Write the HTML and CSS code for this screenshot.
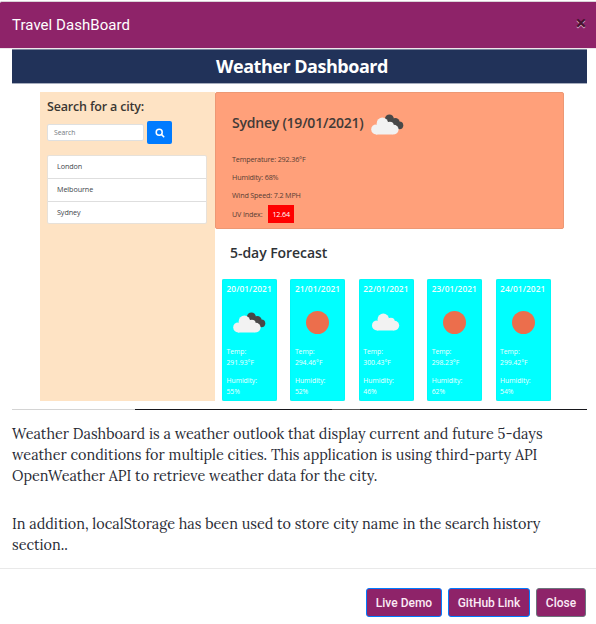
FILE: index.html
```html
<!DOCTYPE html>
<html lang="en">
<head>
<meta charset="utf-8">
<title>Travel DashBoard</title>
<link rel="stylesheet" href="styles.css">
</head>
<body>
<svg class="symbols" aria-hidden="true">
  <symbol id="cloud" viewBox="0 0 28 18"><g fill="#f2f2f2"><circle cx="5" cy="12.4" r="5"/><circle cx="11.3" cy="6.2" r="5.7"/><circle cx="18.8" cy="8.7" r="4"/><circle cx="22.4" cy="12.6" r="4.8"/><path d="M5 9 11 5l11 5v7.4H5Z"/></g></symbol>
  <symbol id="clouds" viewBox="0 0 33 21"><g fill="#484848"><circle cx="18.4" cy="4.9" r="4.5"/><circle cx="24.4" cy="8.2" r="4.2"/><circle cx="28.4" cy="11.3" r="3.9"/><path d="m17 5 8 0 4 10h-4Z"/></g><g fill="#f2f2f2"><circle cx="5.2" cy="15.4" r="5"/><circle cx="11.4" cy="9.2" r="5.7"/><circle cx="18.8" cy="11.7" r="4"/><circle cx="22.8" cy="15.6" r="4.8"/><path d="m5 12 6-4 11 5v7.4H5Z"/></g></symbol>
</svg>
<div class="modal">
  <header class="modal-header"><h5>Travel DashBoard</h5><button class="dismiss" aria-label="Close">×</button></header>
  <main class="modal-body">
    <section class="shot">
      <div class="banner"><span class="banner-text">Weather Dashboard</span></div>
      <div class="dashboard">
        <aside class="sidebar">
          <h3>Search for a city:</h3>
          <div class="search"><div class="field">Search</div><div class="search-button"><svg viewBox="0 0 10 10"><circle cx="4.2" cy="4.2" r="3"/><path d="m6.4 6.4 2.8 2.8"/></svg></div></div>
          <ul class="cities"><li>London</li><li>Melbourne</li><li>Sydney</li></ul>
        </aside>
        <div class="weather">
          <div class="today">
            <div class="place"><h3>Sydney (19/01/2021)</h3><svg class="clouds"><use href="#clouds"/></svg></div>
            <p>Temperature: 292.36°F</p><p>Humidity: 68%</p><p>Wind Speed: 7.2 MPH</p><p>UV Index: <span class="uv">12.64</span></p>
          </div>
          <h3 class="forecast-title">5-day Forecast</h3>
          <div class="forecast">
            <div class="card"><h4>20/01/2021</h4><div class="icon"><svg class="clouds"><use href="#clouds"/></svg></div><p>Temp:<br>291.93°F</p><p>Humidity:<br>55%</p></div>
            <div class="card"><h4>21/01/2021</h4><div class="icon"><i class="sun"></i></div><p>Temp:<br>294.46°F</p><p>Humidity:<br>52%</p></div>
            <div class="card"><h4>22/01/2021</h4><div class="icon"><svg class="cloud"><use href="#cloud"/></svg></div><p>Temp:<br>300.43°F</p><p>Humidity:<br>46%</p></div>
            <div class="card"><h4>23/01/2021</h4><div class="icon"><i class="sun"></i></div><p>Temp:<br>298.23°F</p><p>Humidity:<br>62%</p></div>
            <div class="card"><h4>24/01/2021</h4><div class="icon"><i class="sun"></i></div><p>Temp:<br>299.42°F</p><p>Humidity:<br>54%</p></div>
          </div>
        </div>
      </div>
      <div class="scrollbar"></div>
    </section>
    <p class="copy">Weather Dashboard is a weather outlook that display current and future 5-days<br>weather conditions for multiple cities. This application is using third-party API<br>OpenWeather API to retrieve weather data for the city.</p>
    <p class="copy">In addition, localStorage has been used to store city name in the search history<br>section..</p>
  </main>
  <footer class="modal-footer"><button class="demo">Live Demo</button><button class="github">GitHub Link</button><button class="close">Close</button></footer>
</div>
</body>
</html>
```
FILE: styles.css
```css
* { box-sizing: border-box; }
body { margin: 0; background: #fff; color: #212529; overflow: hidden; }
h3, h4, h5, p, ul { margin: 0; padding: 0; font-weight: 400; }
button { margin: 0; padding: 0; }
.symbols { position: absolute; width: 0; height: 0; }
.modal { width: 596px; height: 624px; padding-top: 1px; }
.modal-header { height: 48px; display: flex; justify-content: space-between; align-items: center; padding: 0 8px 0 12px; background: #8e2369; border-top: 1px solid #d9d2d7; border-bottom: 1px solid #eee6eb; border-top-left-radius: 2px; }
h5 { font: 400 15px/20px Roboto, sans-serif; letter-spacing: .05px; color: #fff; }
.dismiss { width: 14px; border: 0; background: none; font: 700 20px/20px "Open Sans", sans-serif; color: #47122f; text-shadow: 0 1px 0 #d9adc8; padding-bottom: 4px; }
.modal-body { padding: 0 9px 0 12px; }
.shot { height: 361px; font-family: "Open Sans", sans-serif; display: flex; flex-direction: column; }
.banner { height: 35px; background: #213259; border-top: 1px solid #7a849b; border-bottom: 1px solid #a6adbd; display: flex; justify-content: center; color: #fff; font: 700 18px/33px "Open Sans", sans-serif; letter-spacing: -.48px; padding-left: 5px; }
.dashboard { height: 317px; padding: 8px 23px 0 28px; display: flex; }
.sidebar { width: 175px; height: 309px; background: #fee3c4; padding: 6px 7px 0; }
.sidebar h3 { font: 600 12.5px/18px "Open Sans", sans-serif; letter-spacing: -.17px; color: #3b3733; }
.search { display: flex; gap: 3px; align-items: center; height: 23px; margin-top: 5px; }
.field { width: 97px; height: 17px; background: #fff; border: 1px solid #dfe0e0; border-radius: 2px; font-size: 6.8px; line-height: 16px; padding-left: 6px; color: #74797e; }
.search-button { width: 25px; height: 23px; background: #007bff; border-radius: 2px; display: grid; place-items: center; }
.search-button svg { width: 10px; height: 10px; fill: none; stroke: #fff; stroke-width: 1.5; }
.cities { list-style: none; margin-top: 11px; width: 160px; border: 1px solid #e7e1d9; border-radius: 2px; background: #fff; }
.cities li { height: 22.3px; padding-left: 9px; font-size: 7.2px; letter-spacing: -.08px; line-height: 21px; color: #40454a; }
.cities li + li { border-top: 1px solid #dedede; }
.weather { width: 349px; }
.today { height: 137px; background: #ffa07a; border: 1px solid #ed9874; border-radius: 2px; padding: 17px 0 0 16px; }
.place { display: flex; height: 25px; align-items: center; gap: 8px; margin-bottom: 15px; }
.place h3 { font: 600 14px/24px "Open Sans", sans-serif; letter-spacing: -.23px; color: #423a37; white-space: nowrap; }
.place .clouds { margin-top: 3px; }
.clouds { width: 33px; height: 21px; }
.cloud { width: 28px; height: 18px; }
.today p { height: 18.2px; font-size: 7.2px; letter-spacing: -.16px; line-height: 18.2px; color: #573d34; white-space: nowrap; }
.uv { display: inline-block; background: #f00; color: #fff; width: 26px; height: 18px; text-align: center; margin-left: 4px; }
.forecast-title { height: 50px; padding-left: 15px; font: 600 14px/48px "Open Sans", sans-serif; letter-spacing: -.05px; color: #2e3236; }
.forecast { display: grid; grid-template-columns: repeat(5, 55px); gap: 13.4px; padding-left: 7px; }
.card { height: 122px; background: #0ff; border-radius: 2px; padding: 4px 0 0 4.5px; color: #eff; font-size: 6.8px; letter-spacing: -.02px; line-height: 10.8px; white-space: nowrap; box-shadow: inset 0 0 1px #00bcbc; }
.card h4 { font: 600 8.3px/12px "Open Sans", sans-serif; letter-spacing: .08px; color: #efffff; }
.icon { width: 46px; height: 54px; display: grid; place-items: center; margin-bottom: -2px; }
.sun { width: 23px; height: 23px; border-radius: 50%; background: #ec6e4c; }
.card p { height: 29px; }
.scrollbar { height: 1px; margin-top: 8px; background: linear-gradient(90deg, #d4d4d4 123px, #17171c 123px 320px, #555 320px 348px, #17171c 348px); }
.copy { font: 400 14.4px/21px Lora, "Liberation Serif", serif; color: #292b35; white-space: nowrap; margin-top: 14px; }
.copy + .copy { margin-top: 27px; }
.modal-footer { height: 56px; margin-top: 12px; border-top: 1px solid #e9e9e9; display: flex; justify-content: flex-end; padding: 19px 10px 0 0; gap: 6px; }
.modal-footer button { height: 29px; border: 1px solid #007bff; border-radius: 3px; background: #8e2369; color: #fbebf5; font: 500 12px/26px Roboto, sans-serif; white-space: nowrap; }
.demo { width: 76px; }
.github { width: 82px; }
.modal-footer .close { width: 50px; border-color: #6c757d; }
```
